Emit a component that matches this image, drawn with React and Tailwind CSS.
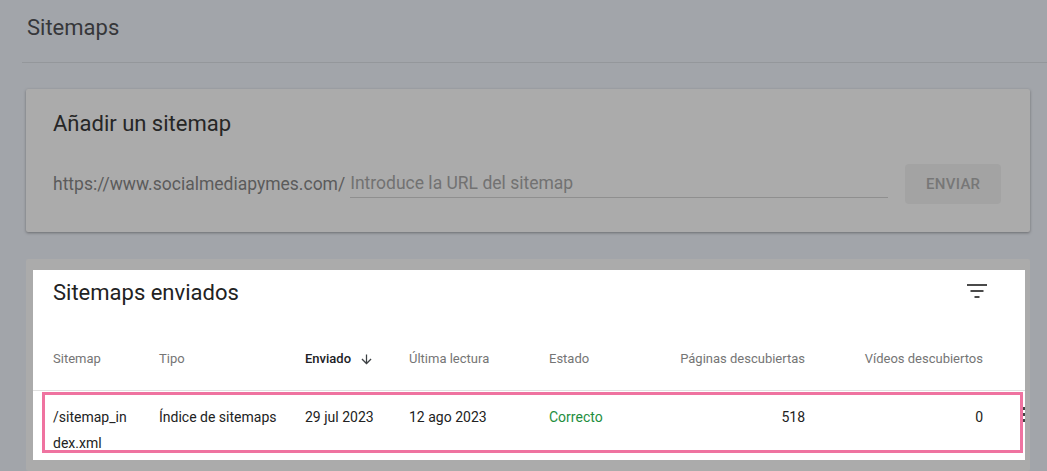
const cols = "grid grid-cols-[106px_146px_104px_140px_111px_145px_178px] items-start";

const FilterIcon = () => (
  <svg width="22" height="14" viewBox="0 0 22 14" className="block">
    <rect x="1" y="0" width="20" height="2" fill="#4a4a4a" />
    <rect x="4.5" y="6" width="13" height="2" fill="#4a4a4a" />
    <rect x="8.5" y="12" width="5" height="2" fill="#4a4a4a" />
  </svg>
);

const ArrowDown = () => (
  <svg width="15" height="15" viewBox="0 0 24 24" className="block">
    <path
      d="M20 12l-1.41-1.41L13 16.17V4h-2v12.17l-5.58-5.59L4 12l8 8 8-8z"
      fill="#3c4043"
    />
  </svg>
);

export default function App() {
  return (
    <div
      className="w-[1047px] h-[471px] overflow-hidden bg-[#a2a5aa] pl-[22px]"
      style={{ fontFamily: "Roboto, 'Liberation Sans', sans-serif" }}
    >
      {/* page header */}
      <div className="h-[63px] border-b border-[#94979b] pl-[5px] pt-[14px]">
        <h1 className="text-[22px] leading-[28px] text-[#36373a]">Sitemaps</h1>
      </div>

      {/* add sitemap card */}
      <div className="ml-[4px] mt-[26px] w-[1004px] h-[143px] bg-[#ababab] rounded-[2px] shadow-[0_1px_3px_rgba(0,0,0,0.35)] pl-[27px] pr-[28px] pt-[21px]">
        <h2 className="text-[22px] leading-[28px] text-[#262626]">
          Añadir un sitemap
        </h2>
        <div className="mt-[26px] flex items-center">
          <span className="text-[17.5px] leading-[24px] text-[#5b5b5b]">
            https://www.socialmediapymes.com/
          </span>
          <div className="ml-[5px] w-[538px] h-[28px] border-b border-[#8f8f8f] pt-[1px]">
            <span className="text-[17.5px] leading-[24px] text-[#727272]">
              Introduce la URL del sitemap
            </span>
          </div>
          <button className="ml-[17px] w-[96px] h-[40px] rounded-[4px] bg-[#a3a3a3] text-[15px] font-medium tracking-[0.3px] text-[#777777]">
            ENVIAR
          </button>
        </div>
      </div>

      {/* submitted sitemaps card */}
      <div className="ml-[4px] mt-[27px] w-[1004px] h-[212px] bg-[#ababab] rounded-[2px] pl-[7px] pt-[11px]">
        <div className="relative w-[992px] h-[190px] bg-white">
          <div className="flex items-start justify-between pl-[20px] pr-[37px] pt-[9px]">
            <h2 className="text-[22px] leading-[28px] text-[#222222]">
              Sitemaps enviados
            </h2>
            <div className="pt-[5px]">
              <FilterIcon />
            </div>
          </div>

          {/* header row */}
          <div
            className={`${cols} mt-[39px] pl-[20px] h-[45px] border-b border-[#e0e0e0] text-[13px] leading-[20px] text-[#757575] pt-[3px]`}
          >
            <span>Sitemap</span>
            <span>Tipo</span>
            <span className="flex items-center gap-[8px] font-medium text-[#202124]">
              Enviado
              <ArrowDown />
            </span>
            <span>Última lectura</span>
            <span>Estado</span>
            <span className="text-right">Páginas descubiertas</span>
            <span className="text-right">Vídeos descubiertos</span>
          </div>

          {/* data row */}
          <div className="ml-[9px] mt-[1px] w-[981px] h-[61px] border-[3px] border-[#ef73a0]">
            <div
              className={`${cols} pl-[8px] pt-[9px] text-[14px] leading-[26px] text-[#222222]`}
            >
              <span className="w-[76px] break-all">/sitemap_index.xml</span>
              <span>Índice de sitemaps</span>
              <span>29 jul 2023</span>
              <span>12 ago 2023</span>
              <span className="text-[#1e8e3e]">Correcto</span>
              <span className="text-right">518</span>
              <span className="text-right">0</span>
            </div>
          </div>

          {/* row menu */}
          <div className="absolute left-[990px] top-[137px] flex flex-col gap-[3px]">
            <span className="block w-[2px] h-[3px] bg-[#444]" />
            <span className="block w-[2px] h-[3px] bg-[#444]" />
            <span className="block w-[2px] h-[3px] bg-[#444]" />
          </div>
        </div>
      </div>
    </div>
  );
}
